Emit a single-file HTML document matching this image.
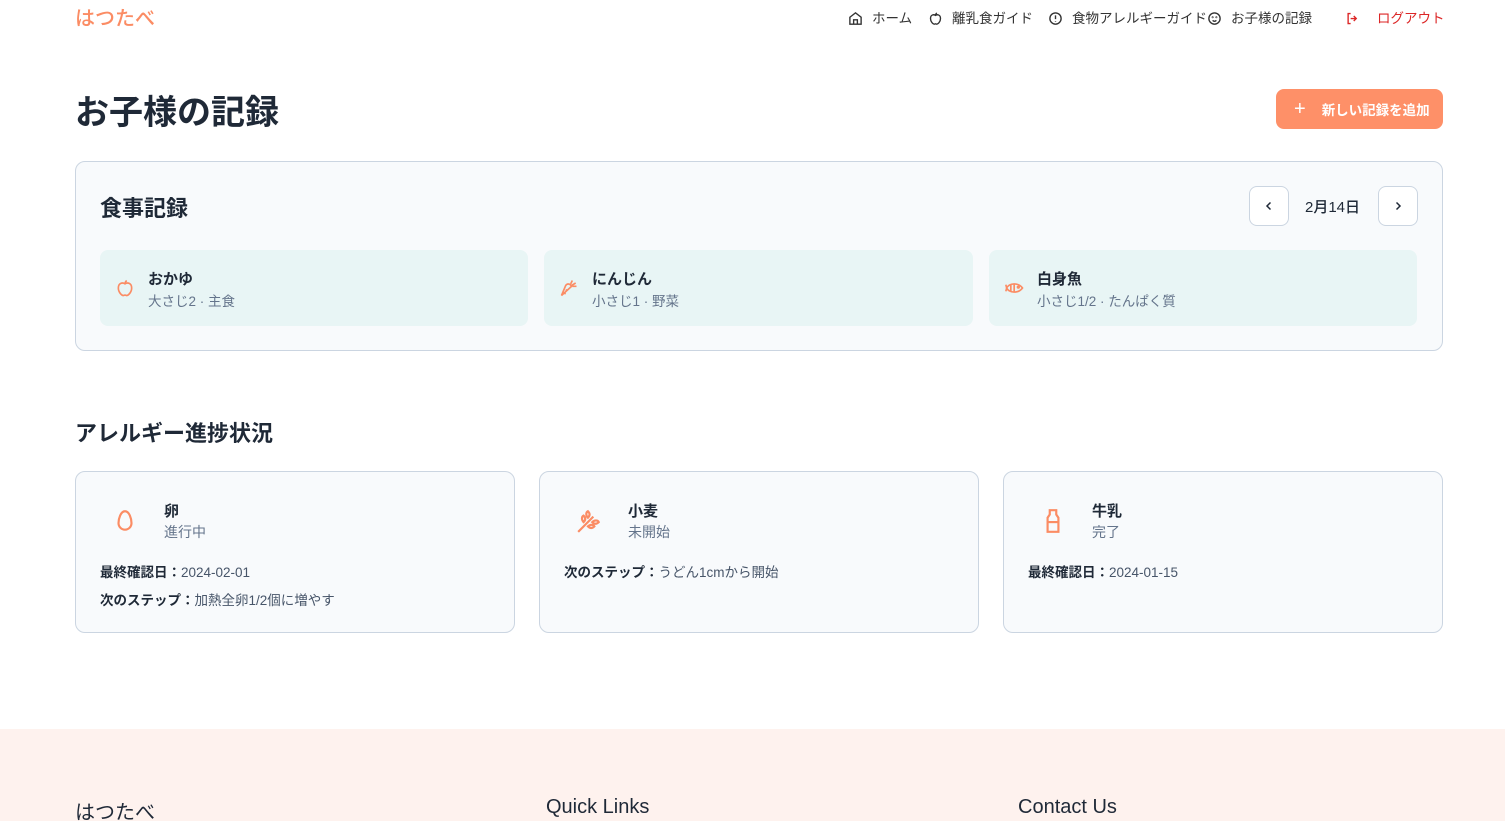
<!DOCTYPE html>
<html><head><meta charset="utf-8"><style>
*{box-sizing:border-box;margin:0;padding:0}
body{width:1505px;height:821px;overflow:hidden;background:#fff;font-family:"Liberation Sans","Noto Sans CJK JP",sans-serif;color:#1f2937}
.nav{position:absolute;top:0;left:0;width:1505px;height:38px}
.logo{position:absolute;left:75px;top:2px;font-size:20px;color:#fb8c64;font-weight:500}
.nav .i{position:absolute;top:11px}
.nav .x{position:absolute;top:10px;font-size:13.5px;color:#333;white-space:nowrap;line-height:18px}
h1{position:absolute;left:75px;top:85px;font-size:34px;font-weight:700;color:#1f2937;white-space:nowrap}
.add{position:absolute;left:1276px;top:89px;width:167px;height:40px;background:#fe9068;border-radius:8px;color:#fff;font-size:13.5px;font-weight:700;display:flex;align-items:center;padding-left:18px;white-space:nowrap}
.add b{font-size:20px;font-weight:400;margin-right:16px}
.card{position:absolute;background:#f8fafc;border:1px solid #cbd5e1;border-radius:10px}
.meal{position:absolute;top:88px;height:76px;width:428px;background:#e8f5f5;border-radius:8px}
.meal svg{position:absolute;left:15px;top:28px}
.meal .t{position:absolute;left:48px;top:18px;font-size:15px;font-weight:700}
.meal .s{position:absolute;left:48px;top:40px;font-size:13.5px;color:#64748b}
.btn{position:absolute;width:40px;height:40px;border:1px solid #cbd5e1;border-radius:8px;background:#fff;display:flex;align-items:center;justify-content:center}
.al .ic{position:absolute;left:36px;top:36px}
.al .t{position:absolute;left:88px;top:28px;font-size:15px;font-weight:700}
.al .s{position:absolute;left:88px;top:50px;font-size:14px;color:#64748b}
.al .l{position:absolute;left:24px;font-size:13.5px;color:#475569}
.al .l b{color:#1f2937}
.footer{position:absolute;top:729px;left:0;width:1505px;height:92px;background:#fef2ee}
.footer div{position:absolute;top:67px;font-size:20px;color:#1f2937}
</style></head><body>
<div class="nav">
<div class="logo">はつたべ</div>
<svg class="i" style="left:848px" width="15" height="15" viewBox="0 0 24 24" fill="none" stroke="#333" stroke-width="2.2"><path d="M3 10l9-7 9 7v11H3z"/><path d="M9 21v-7h6v7"/></svg>
<div class="x" style="left:872px">ホーム</div>
<svg class="i" style="left:928px" width="15" height="15" viewBox="0 0 24 24" fill="none" stroke="#333" stroke-width="2.2"><path d="M12 7c-3-2-8-1-8 5 0 5 4 9 6 9 1 0 1-.5 2-.5s1 .5 2 .5c2 0 6-4 6-9 0-6-5-7-8-5z"/><path d="M12 7c0-2 1-3 2-4"/></svg>
<div class="x" style="left:952px">離乳食ガイド</div>
<svg class="i" style="left:1048px" width="15" height="15" viewBox="0 0 24 24" fill="none" stroke="#333" stroke-width="2.2"><circle cx="12" cy="12" r="9"/><path d="M12 7v6M12 16v1"/></svg>
<div class="x" style="left:1072px">食物アレルギーガイド</div>
<svg class="i" style="left:1207px" width="15" height="15" viewBox="0 0 24 24" fill="none" stroke="#333" stroke-width="2.2"><circle cx="12" cy="12" r="9"/><path d="M9 15c2 2 4 2 6 0"/><circle cx="9" cy="10" r=".5"/><circle cx="15" cy="10" r=".5"/></svg>
<div class="x" style="left:1231px">お子様の記録</div>
<svg class="i" style="left:1345px" width="15" height="15" viewBox="0 0 24 24" fill="none" stroke="#dc2626" stroke-width="2.2"><path d="M9 4H5v16h4M14 8l4 4-4 4M18 12H9"/></svg>
<div class="x" style="left:1377px;color:#dc2626">ログアウト</div>
</div>
<h1>お子様の記録</h1>
<div class="add"><b>+</b>新しい記録を追加</div>

<div class="card" style="left:75px;top:161px;width:1368px;height:190px">
<div style="position:absolute;left:24px;top:29px;font-size:22px;font-weight:700">食事記録</div>
<div class="btn" style="left:1173px;top:24px"><svg width="12" height="12" viewBox="0 0 24 24" fill="none" stroke="#1f2937" stroke-width="3"><path d="M15 5l-7 7 7 7"/></svg></div>
<div style="position:absolute;left:1229px;top:34px;font-size:15px;font-weight:500">2月14日</div>
<div class="btn" style="left:1302px;top:24px"><svg width="12" height="12" viewBox="0 0 24 24" fill="none" stroke="#1f2937" stroke-width="3"><path d="M9 5l7 7-7 7"/></svg></div>
<div class="meal" style="left:24px"><svg width="20" height="20" viewBox="0 0 24 24" fill="none" stroke="#fb8c64" stroke-width="2"><path d="M12 7c-3-2-8-1-8 5 0 5 4 9 6 9 1 0 1-.5 2-.5s1 .5 2 .5c2 0 6-4 6-9 0-6-5-7-8-5z"/><path d="M12 7c0-2 1-3 2-4"/></svg><div class="t">おかゆ</div><div class="s">大さじ2 · 主食</div></div>
<div class="meal" style="left:468px;width:429px"><svg width="20" height="20" viewBox="0 0 24 24" fill="none" stroke="#fb8c64" stroke-width="2"><path d="M3 21l5-12c2-3 6-2 7 1z"/><path d="M15 9l5-3M14 7l2-4M16 10l5 0M8 14l2 1M6 18l2 1"/></svg><div class="t">にんじん</div><div class="s">小さじ1 · 野菜</div></div>
<div class="meal" style="left:913px"><svg width="22" height="20" viewBox="0 0 24 24" fill="none" stroke="#fb8c64" stroke-width="2"><path d="M2 12c3-6 14-7 19 0-5 7-16 6-19 0zM2 12l-1-4M2 12l-1 4"/><path d="M7 8v8M11 7v10"/><circle cx="16" cy="11" r="1"/></svg><div class="t">白身魚</div><div class="s">小さじ1/2 · たんぱく質</div></div>
</div>

<div style="position:absolute;left:75px;top:416px;font-size:22px;font-weight:700">アレルギー進捗状況</div>

<div class="card al" style="left:75px;top:471px;width:440px;height:162px">
<svg class="ic" width="26" height="26" viewBox="0 0 24 24" fill="none" stroke="#fb8c64" stroke-width="2"><path d="M12 3c-4 0-6 7-6 11a6 6 0 0012 0c0-4-2-11-6-11z"/></svg>
<div class="t">卵</div><div class="s">進行中</div>
<div class="l" style="top:89px"><b>最終確認日：</b>2024-02-01</div>
<div class="l" style="top:117px"><b>次のステップ：</b>加熱全卵1/2個に増やす</div>
</div>
<div class="card al" style="left:539px;top:471px;width:440px;height:162px">
<svg class="ic" width="26" height="26" viewBox="0 0 24 24" fill="none" stroke="#fb8c64" stroke-width="2"><path d="M2 22L16 8M7 13c-2-2-2-5 0-6 2 2 2 4 0 6zM11 9c-2-2-2-5 0-6 2 2 2 4 0 6zM11 17c2-2 5-2 6 0-2 2-4 2-6 0zM15 13c2-2 5-2 6 0-2 2-4 2-6 0z"/></svg>
<div class="t">小麦</div><div class="s">未開始</div>
<div class="l" style="top:89px"><b>次のステップ：</b>うどん1cmから開始</div>
</div>
<div class="card al" style="left:1003px;top:471px;width:440px;height:162px">
<svg class="ic" width="26" height="26" viewBox="0 0 24 24" fill="none" stroke="#fb8c64" stroke-width="2"><path d="M9 2h6v4l2 3v13H7V9l2-3z"/><path d="M7 13h10"/></svg>
<div class="t">牛乳</div><div class="s">完了</div>
<div class="l" style="top:89px"><b>最終確認日：</b>2024-01-15</div>
</div>

<div class="footer">
<div style="left:75px">はつたべ</div>
<div style="left:546px">Quick Links</div>
<div style="left:1018px">Contact Us</div>
</div>
</body></html>
